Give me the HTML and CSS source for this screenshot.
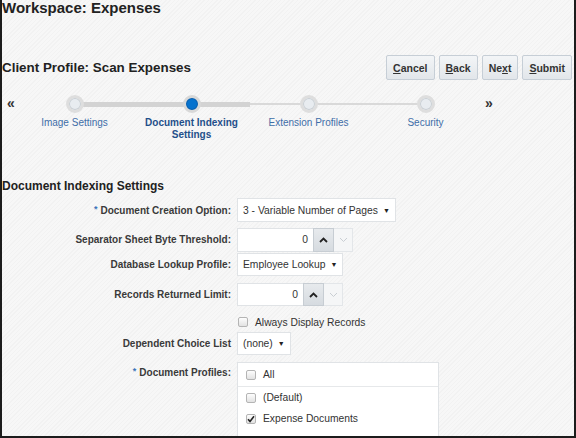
FILE: index.html
```html
<!DOCTYPE html>
<html lang="en">
<head>
	<meta charset="UTF-8">
	<title>Workspace: Expenses</title>
	<link rel="stylesheet" href="styles.css">
</head>
<body>
	<div class="frame">
		<h1 class="page-title">Workspace: Expenses</h1>

		<div class="header-row">
			<h2 class="sub-title">Client Profile: Scan Expenses</h2>
			<div class="actions">
				<button class="btn"><u>C</u>ancel</button>
				<button class="btn"><u>B</u>ack</button>
				<button class="btn">Ne<u>x</u>t</button>
				<button class="btn"><u>S</u>ubmit</button>
			</div>
		</div>

		<div class="train">
			<span class="train-arrow">&laquo;</span>
			<ol class="train-steps">
				<li class="step step--visited">
					<div class="step-track"><span class="step-dot"></span></div>
					<div class="step-label">Image Settings</div>
				</li>
				<li class="step step--current">
					<div class="step-track"><span class="step-dot step-dot--current"></span></div>
					<div class="step-label step-label--current">Document Indexing Settings</div>
				</li>
				<li class="step step--next">
					<div class="step-track"><span class="step-dot"></span></div>
					<div class="step-label">Extension Profiles</div>
				</li>
				<li class="step step--last">
					<div class="step-track"><span class="step-dot"></span></div>
					<div class="step-label">Security</div>
				</li>
			</ol>
			<span class="train-arrow">&raquo;</span>
		</div>

		<h3 class="section-title">Document Indexing Settings</h3>

		<div class="form">
			<div class="form-row row-1">
				<label class="form-label"><span class="required">*</span>Document Creation Option:</label>
				<div class="select"><span>3 - Variable Number of Pages</span><span class="select-arrow">&#9660;</span></div>
			</div>

			<div class="form-row row-2">
				<label class="form-label">Separator Sheet Byte Threshold:</label>
				<div class="spinner">
					<div class="spinner-input">0</div>
					<div class="spin-up">
						<svg width="9" height="6" viewBox="0 0 9 6"><polyline points="1,5 4.5,1.5 8,5" fill="none" stroke="#222" stroke-width="1.8"/></svg>
					</div>
					<div class="spin-down">
						<svg width="9" height="6" viewBox="0 0 9 6"><polyline points="1,1 4.5,4.5 8,1" fill="none" stroke="#c9ced3" stroke-width="1"/></svg>
					</div>
				</div>
			</div>

			<div class="form-row row-3">
				<label class="form-label">Database Lookup Profile:</label>
				<div class="select select--short"><span>Employee Lookup</span><span class="select-arrow">&#9660;</span></div>
			</div>

			<div class="form-row row-4">
				<label class="form-label">Records Returned Limit:</label>
				<div class="spinner spinner--short">
					<div class="spinner-input">0</div>
					<div class="spin-up">
						<svg width="9" height="6" viewBox="0 0 9 6"><polyline points="1,5 4.5,1.5 8,5" fill="none" stroke="#222" stroke-width="1.8"/></svg>
					</div>
					<div class="spin-down">
						<svg width="9" height="6" viewBox="0 0 9 6"><polyline points="1,1 4.5,4.5 8,1" fill="none" stroke="#c9ced3" stroke-width="1"/></svg>
					</div>
				</div>
			</div>

			<div class="form-row row-5">
				<span class="form-label"></span>
				<label class="check-item"><span class="check"></span>Always Display Records</label>
			</div>

			<div class="form-row row-6">
				<label class="form-label">Dependent Choice List</label>
				<div class="select select--short"><span>(none)</span><span class="select-arrow">&#9660;</span></div>
			</div>

			<div class="form-row row-7">
				<label class="form-label form-label--top"><span class="required">*</span>Document Profiles:</label>
				<div class="listbox">
					<div class="list-item list-item--all"><span class="check"></span>All</div>
					<div class="list-item"><span class="check"></span>(Default)</div>
					<div class="list-item"><span class="check check--on"><svg width="8" height="8" viewBox="0 0 8 8"><polyline points="1,4.2 3,6.4 7,1.2" fill="none" stroke="#222" stroke-width="1.6"/></svg></span>Expense Documents</div>
				</div>
			</div>
		</div>
	</div>
</body>
</html>
```

FILE: styles.css
```css
*{
	margin:0;
	padding:0;
	box-sizing:border-box;
}
body{
	font-family:"Liberation Sans", Arial, sans-serif;
	color:#333;
	background:#fff;
}
.frame{
	width:576px;
	height:438px;
	overflow:hidden;
	border:2px solid #1c1c1c;
	border-top:0;
	background:repeating-linear-gradient(-45deg, #f7f7f7 0 2px, #f2f2f2 2px 3px);
}

/* titles */
.page-title{
	font-size:15px;
	line-height:15px;
	font-weight:bold;
	color:#222;
}
.header-row{
	display:flex;
	align-items:center;
	justify-content:space-between;
	height:25px;
	margin-top:40px;
	padding-right:2px;
}
.sub-title{
	font-size:13.4px;
	font-weight:bold;
	color:#222;
}
.actions{
	display:flex;
	gap:4px;
}
.btn{
	height:25px;
	padding:0 6px;
	font-family:"Liberation Sans", Arial, sans-serif;
	font-size:10.5px;
	font-weight:bold;
	color:#333;
	border:1px solid #c6ced6;
	border-radius:2px;
	background:linear-gradient(#f3f5f7, #e2e6ea);
}

/* train */
.train{
	display:flex;
	align-items:flex-start;
	margin-top:15px;
	padding-left:4px;
}
.train-arrow{
	width:10px;
	height:18px;
	line-height:17px;
	font-size:14px;
	font-weight:bold;
	color:#333;
	text-align:center;
}
.train-steps{
	display:flex;
	list-style:none;
}
.step{
	width:117px;
}
.step-track{
	height:18px;
	display:flex;
	justify-content:center;
	align-items:center;
}
.step--visited .step-track{
	background:linear-gradient(#d3d3d3, #d3d3d3) right center / 50% 5px no-repeat;
}
.step--current .step-track{
	background:linear-gradient(#d3d3d3, #d3d3d3) center / 100% 5px no-repeat;
}
.step--next .step-track{
	background:linear-gradient(#d9d9d9, #d9d9d9) center / 100% 2px no-repeat;
}
.step--last .step-track{
	background:linear-gradient(#d9d9d9, #d9d9d9) left center / 50% 2px no-repeat;
}
.step-dot{
	width:18px;
	height:18px;
	border-radius:50%;
	border:3px solid #dedede;
	background:#e8ecf0;
	box-shadow:inset 0 0 0 1px #c9cfd4;
}
.step-dot--current{
	border-color:#d8d8d8;
	background:#0572ce;
	box-shadow:inset 0 0 0 1px #0b5ca8;
}
.step-label{
	margin-top:4px;
	padding:0 12px;
	font-size:10px;
	line-height:12px;
	text-align:center;
	color:#3f6ea8;
}
.step-label--current{
	font-weight:bold;
	color:#1f4f8a;
}

/* form */
.section-title{
	margin-top:38px;
	font-size:12px;
	line-height:14px;
	font-weight:bold;
	color:#222;
}
.form{
	margin-top:5px;
}
.form-row{
	display:flex;
	align-items:center;
}
.row-2{ margin-top:6px; }
.row-3{ margin-top:1px; }
.row-4{ margin-top:7px; }
.row-5{ margin-top:7px; height:18px; }
.row-6{ margin-top:1px; }
.row-7{ margin-top:7px; align-items:flex-start; }

.form-label{
	flex-shrink:0;
	width:229px;
	margin-right:6px;
	text-align:right;
	font-size:10px;
	line-height:12px;
	font-weight:bold;
	color:#3a3a3a;
}
.form-label--top{
	padding-top:3px;
}
.required{
	margin-right:3px;
	font-size:9px;
	vertical-align:2px;
	color:#3b73b9;
}

.select{
	display:flex;
	align-items:center;
	gap:5px;
	height:24px;
	padding:0 5px 0 5px;
	font-size:10.3px;
	color:#333;
	background:#fff;
	border:1px solid #e0e3e6;
}
.select--short{
	height:23px;
}
.select-arrow{
	font-size:7px;
	color:#222;
}

.spinner{
	display:flex;
	height:24px;
}
.spinner--short{
	height:23px;
}
.spinner-input{
	width:76px;
	padding-right:5px;
	text-align:right;
	font-size:10.3px;
	line-height:22px;
	color:#333;
	background:#fff;
	border:1px solid #e0e3e6;
	border-right:0;
}
.spinner--short .spinner-input{
	width:66px;
	line-height:21px;
}
.spin-up{
	width:21px;
	display:flex;
	align-items:center;
	justify-content:center;
	background:linear-gradient(#e7eaed, #d6dbe0);
	border:1px solid #c7cdd3;
}
.spin-down{
	width:19px;
	display:flex;
	align-items:center;
	justify-content:center;
	background:#f5f6f7;
	border:1px solid #e3e6e9;
	border-left:0;
}

.check-item{
	display:flex;
	align-items:center;
	gap:7px;
	margin-left:1px;
	font-size:10.3px;
	color:#333;
}
.check{
	display:flex;
	align-items:center;
	justify-content:center;
	width:10px;
	height:10px;
	flex-shrink:0;
	border:1px solid #b4b4b4;
	border-radius:2px;
	background:linear-gradient(#fdfdfd, #e2e2e2);
}

.listbox{
	width:202px;
	height:80px;
	background:#fff;
	border:1px solid #e0e3e6;
}
.list-item{
	display:flex;
	align-items:center;
	gap:7px;
	height:21px;
	padding-left:8px;
	font-size:10.3px;
	color:#333;
}
.list-item--all{
	height:24px;
	border-bottom:1px solid #e6e8ea;
}
```
